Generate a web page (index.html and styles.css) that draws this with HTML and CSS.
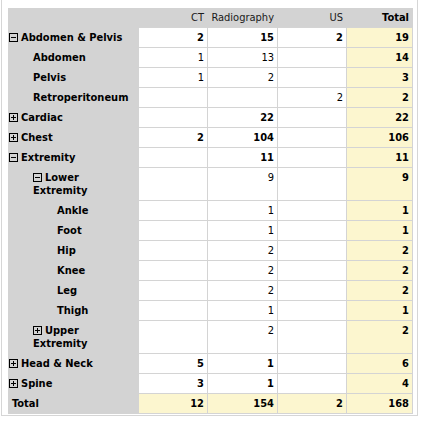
FILE: index.html
```html
<!DOCTYPE html>
<html>
<head>
<meta charset="utf-8">
<link rel="stylesheet" href="styles.css">
</head>
<body>
<div class="frame">
  <div class="pivot">
    <div class="c rh corner"></div>
    <div class="c ch">CT</div>
    <div class="c ch">Radiography</div>
    <div class="c ch">US</div>
    <div class="c ch b">Total</div>

    <div class="c rh l0"><svg class="tg" viewBox="0 0 9 9"><rect x=".5" y=".5" width="8" height="8"/><path d="M2 4.5h5"/></svg>Abdomen &amp; Pelvis</div>
    <div class="c v b">2</div><div class="c v b">15</div><div class="c v b">2</div><div class="c v t">19</div>

    <div class="c rh l1">Abdomen</div>
    <div class="c v">1</div><div class="c v">13</div><div class="c v"></div><div class="c v t">14</div>

    <div class="c rh l1">Pelvis</div>
    <div class="c v">1</div><div class="c v">2</div><div class="c v"></div><div class="c v t">3</div>

    <div class="c rh l1">Retroperitoneum</div>
    <div class="c v"></div><div class="c v"></div><div class="c v">2</div><div class="c v t">2</div>

    <div class="c rh l0"><svg class="tg" viewBox="0 0 9 9"><rect x=".5" y=".5" width="8" height="8"/><path d="M2 4.5h5M4.5 2v5"/></svg>Cardiac</div>
    <div class="c v b"></div><div class="c v b">22</div><div class="c v b"></div><div class="c v t">22</div>

    <div class="c rh l0"><svg class="tg" viewBox="0 0 9 9"><rect x=".5" y=".5" width="8" height="8"/><path d="M2 4.5h5M4.5 2v5"/></svg>Chest</div>
    <div class="c v b">2</div><div class="c v b">104</div><div class="c v b"></div><div class="c v t">106</div>

    <div class="c rh l0"><svg class="tg" viewBox="0 0 9 9"><rect x=".5" y=".5" width="8" height="8"/><path d="M2 4.5h5"/></svg>Extremity</div>
    <div class="c v b"></div><div class="c v b">11</div><div class="c v b"></div><div class="c v t">11</div>

    <div class="c rh l1 wrap"><svg class="tg" viewBox="0 0 9 9"><rect x=".5" y=".5" width="8" height="8"/><path d="M2 4.5h5"/></svg>Lower Extremity</div>
    <div class="c v"></div><div class="c v">9</div><div class="c v"></div><div class="c v t">9</div>

    <div class="c rh l2">Ankle</div>
    <div class="c v"></div><div class="c v">1</div><div class="c v"></div><div class="c v t">1</div>

    <div class="c rh l2">Foot</div>
    <div class="c v"></div><div class="c v">1</div><div class="c v"></div><div class="c v t">1</div>

    <div class="c rh l2">Hip</div>
    <div class="c v"></div><div class="c v">2</div><div class="c v"></div><div class="c v t">2</div>

    <div class="c rh l2">Knee</div>
    <div class="c v"></div><div class="c v">2</div><div class="c v"></div><div class="c v t">2</div>

    <div class="c rh l2">Leg</div>
    <div class="c v"></div><div class="c v">2</div><div class="c v"></div><div class="c v t">2</div>

    <div class="c rh l2">Thigh</div>
    <div class="c v"></div><div class="c v">1</div><div class="c v"></div><div class="c v t">1</div>

    <div class="c rh l1 wrap"><svg class="tg" viewBox="0 0 9 9"><rect x=".5" y=".5" width="8" height="8"/><path d="M2 4.5h5M4.5 2v5"/></svg>Upper Extremity</div>
    <div class="c v"></div><div class="c v">2</div><div class="c v"></div><div class="c v t">2</div>

    <div class="c rh l0"><svg class="tg" viewBox="0 0 9 9"><rect x=".5" y=".5" width="8" height="8"/><path d="M2 4.5h5M4.5 2v5"/></svg>Head &amp; Neck</div>
    <div class="c v b">5</div><div class="c v b">1</div><div class="c v b"></div><div class="c v t">6</div>

    <div class="c rh l0"><svg class="tg" viewBox="0 0 9 9"><rect x=".5" y=".5" width="8" height="8"/><path d="M2 4.5h5M4.5 2v5"/></svg>Spine</div>
    <div class="c v b">3</div><div class="c v b">1</div><div class="c v b"></div><div class="c v t">4</div>

    <div class="c rh tot">Total</div>
    <div class="c v t">12</div><div class="c v t">154</div><div class="c v t">2</div><div class="c v t">168</div>
  </div>
</div>
</body>
</html>
```
FILE: styles.css
```css
html, body {
  margin: 0;
  padding: 0;
  background: #fff;
}
body {
  font-family: "DejaVu Sans Condensed", "DejaVu Sans", sans-serif;
  font-size: 11px;
  color: #000;
}
.frame {
  margin-left: 1px;
  width: 407px;
  padding: 8px 2px 1px 6px;
  border: 1px solid #d6d6d6;
  border-top: none;
}
.pivot {
  display: grid;
  grid-template-columns: 131px 69px 70px 69px 66px;
  width: 405px;
}
.c {
  box-sizing: border-box;
  border-right: 1px solid #d4d4d4;
  border-bottom: 1px solid #d4d4d4;
  padding: 3px 3px 3px 3px;
  line-height: 13px;
  min-height: 20px;
  background: #fff;
}
.rh {
  background: #d3d3d3;
  border-color: #d3d3d3;
  font-weight: bold;
  padding-right: 2px;
}
.ch {
  background: #d3d3d3;
  border-right-color: #d3d3d3;
  text-align: right;
  color: #1a1a1a;
}
.ch.b { font-weight: bold; color: #000; }
.v { text-align: right; }
.b { font-weight: bold; }
.t { background: #fcf6cf; font-weight: bold; }
.l0 { padding-left: 1px; }
.l1 { padding-left: 25px; }
.l2 { padding-left: 49px; }
.tot { padding-left: 4px; }
.tg {
  width: 9px;
  height: 9px;
  margin-right: 3px;
  vertical-align: -1px;
  fill: none;
  stroke: #000;
  stroke-width: 1;
  shape-rendering: crispEdges;
}
.wrap { padding-right: 6px; }
```
